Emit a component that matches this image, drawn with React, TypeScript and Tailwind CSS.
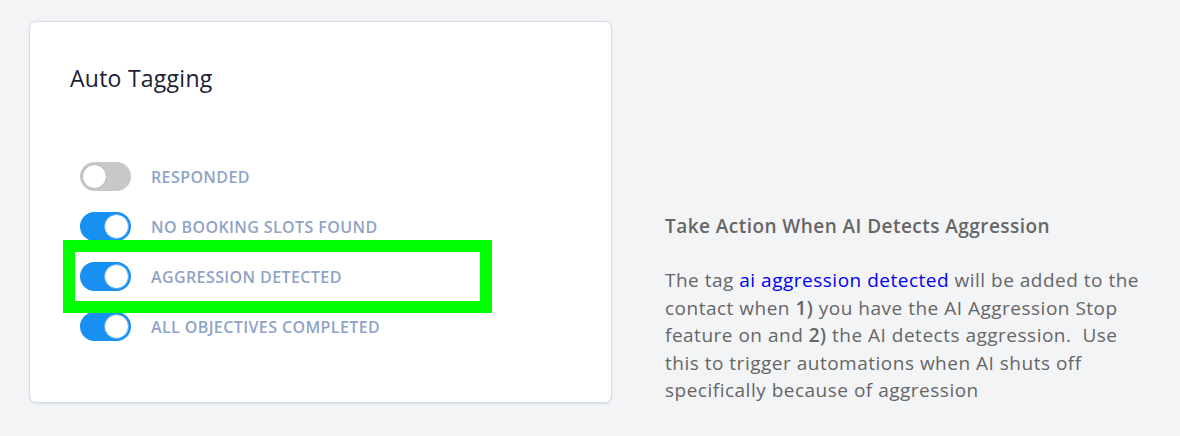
import { useState } from 'react'

const TAGS = [
  { id: 'responded', label: 'RESPONDED', on: false },
  { id: 'no-slots', label: 'NO BOOKING SLOTS FOUND', on: true },
  { id: 'aggression', label: 'AGGRESSION DETECTED', on: true },
  { id: 'objectives', label: 'ALL OBJECTIVES COMPLETED', on: true },
]

function Toggle({ on, onClick }: { on: boolean; onClick: () => void }) {
  return (
    <button
      type="button"
      onClick={onClick}
      className={
        'relative flex h-[29px] w-[51px] shrink-0 items-center rounded-full px-[2px] ' +
        (on ? 'justify-end bg-[#1890f1]' : 'justify-start bg-[#c8c8c8]')
      }
    >
      <span
        className={
          'block h-[25px] w-[25px] rounded-full bg-white ' +
          (on ? 'border border-[#5aaef5]' : 'border border-[#b5b5b5]')
        }
      />
    </button>
  )
}

export default function App() {
  const [tags, setTags] = useState(TAGS)

  const flip = (id: string) => {
    setTags((prev) => prev.map((t) => (t.id === id ? { ...t, on: !t.on } : t)))
  }

  return (
    <main
      className="flex h-[436px] w-[1180px] items-start bg-[#f3f4f6] pl-[29px] pt-[21px]"
      style={{ fontFamily: '"Open Sans", "Liberation Sans", sans-serif' }}
    >
      {/* Card */}
      <div className="relative h-[382px] w-[583px] shrink-0 rounded-[7px] border border-[#d5dce8] bg-white pl-[40px] pt-[40px] shadow-[0_1px_2px_rgba(160,175,205,0.35)]">
        <h2 className="text-[23px] leading-[32px] tracking-[0.25px] text-[#1b2236]">Auto Tagging</h2>

        <div className="mt-[68px] flex flex-col gap-[21px] pl-[10px]">
          {tags.map((t) => (
            <div key={t.id} className="flex items-center gap-[20px]">
              <Toggle on={t.on} onClick={() => flip(t.id)} />
              <span className="text-[16px] font-semibold leading-[20px] tracking-[0.4px] text-[#8fa3c7]">
                {t.label}
              </span>
            </div>
          ))}
        </div>

        {/* highlight annotation */}
        <div className="pointer-events-none absolute left-[33px] top-[218px] h-[73px] w-[429px] border-[12px] border-[#00ff00]" />
      </div>

      {/* Help text */}
      <div className="ml-[53px] mt-[192px] w-[485px] text-[#666666]">
        <h3 className="text-[19px] font-semibold leading-[26px] tracking-[0.45px]">
          Take Action When AI Detects Aggression
        </h3>
        <p className="mt-[28px] text-[19px] leading-[27.5px] tracking-[0.5px]">
          The tag <span className="text-[#0000ee]">ai aggression detected</span> will be added to the contact when{' '}
          <span className="font-semibold">1)</span> you have the AI Aggression Stop feature on and{' '}
          <span className="font-semibold">2)</span> the AI detects aggression.&nbsp; Use this to trigger automations
          when AI shuts off specifically because of aggression
        </p>
      </div>
    </main>
  )
}
